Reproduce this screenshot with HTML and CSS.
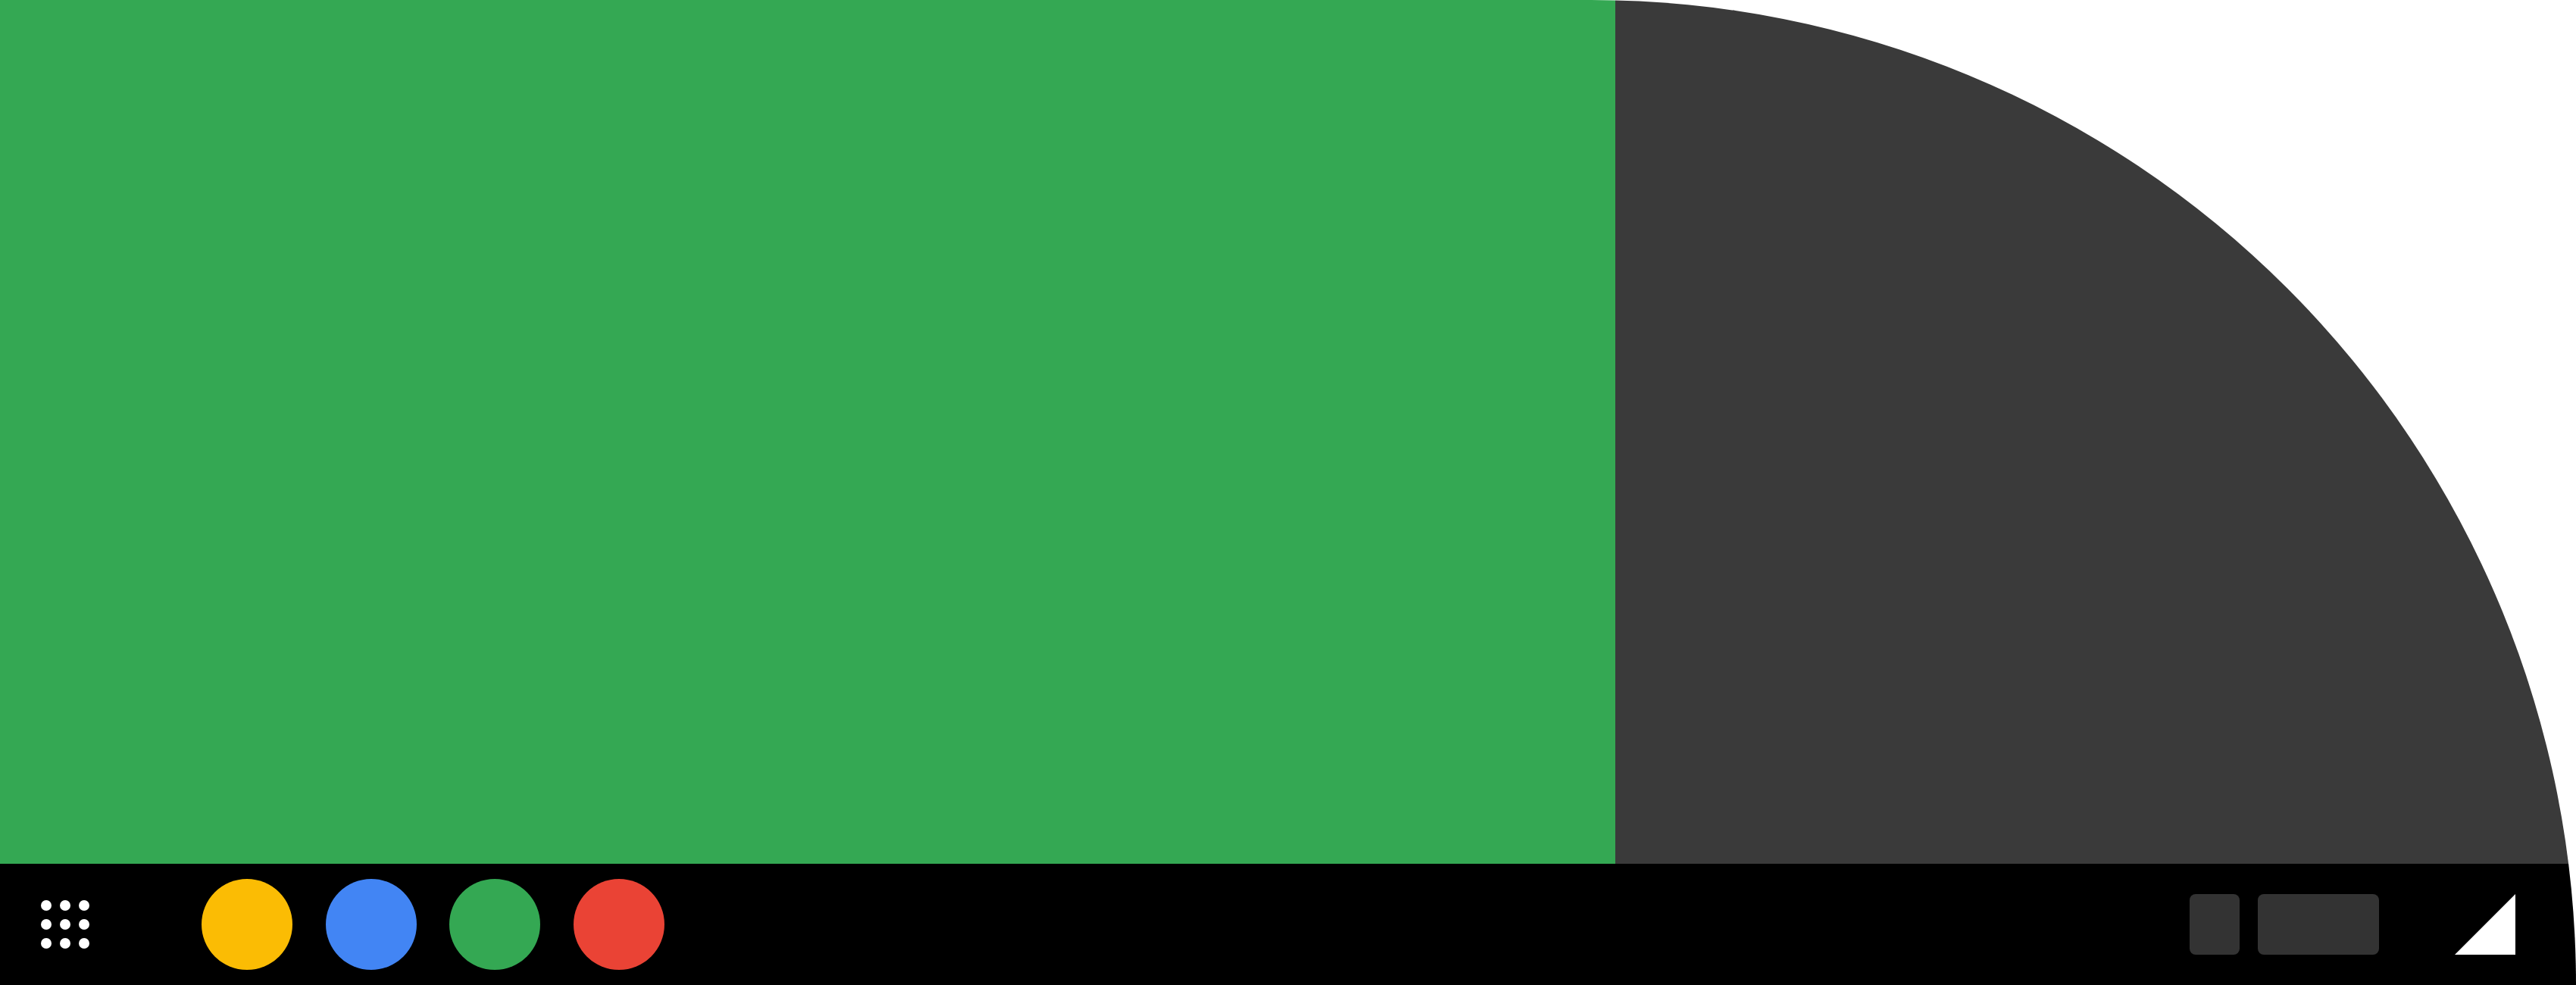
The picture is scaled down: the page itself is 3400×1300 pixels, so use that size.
FILE: index.html
```html
<!DOCTYPE html>
<html lang="en">
<head>
<meta charset="utf-8">
<title>Launcher</title>
<link rel="stylesheet" href="styles.css">
</head>
<body>
<div class="stage">
  <main class="panels">
    <section class="panel-green"></section>
    <section class="panel-dark"></section>
  </main>
  <footer class="shelf">
    <div class="launcher">
      <span class="dot"></span><span class="dot"></span><span class="dot"></span>
      <span class="dot"></span><span class="dot"></span><span class="dot"></span>
      <span class="dot"></span><span class="dot"></span><span class="dot"></span>
    </div>
    <div class="apps">
      <span class="app app-yellow"></span>
      <span class="app app-blue"></span>
      <span class="app app-green"></span>
      <span class="app app-red"></span>
    </div>
    <div class="status">
      <span class="pill pill-small"></span>
      <span class="pill pill-wide"></span>
      <svg class="signal" viewBox="0 0 80 80" aria-hidden="true"><path d="M0 80 80 0V80Z"/></svg>
    </div>
  </footer>
</div>
</body>
</html>
```
FILE: styles.css
```css
html, body {
  margin: 0;
  padding: 0;
  background: #fff;
}

.stage {
  width: 3400px;
  height: 1300px;
  display: flex;
  flex-direction: column;
  overflow: hidden;
  border-top-right-radius: 1300px;
}

.panels {
  height: 1140px;
  display: flex;
}

.panel-green {
  width: 2132px;
  background: #34a853;
}

.panel-dark {
  flex: 1;
  background: #3a3a3a;
}

.shelf {
  height: 160px;
  background: #000;
  display: flex;
  align-items: center;
  padding-left: 54px;
}

.launcher {
  width: 64px;
  display: grid;
  grid-template-columns: repeat(3, 14px);
  gap: 11px;
}

.dot {
  width: 14px;
  height: 14px;
  border-radius: 50%;
  background: #fff;
}

.apps {
  display: flex;
  gap: 43.667px;
  margin-left: 148px;
}

.app {
  width: 120px;
  height: 120px;
  border-radius: 50%;
}

.app-yellow { background: #fbbc04; }
.app-blue { background: #4285f4; }
.app-green { background: #34a853; }
.app-red { background: #ea4335; }

.status {
  display: flex;
  align-items: center;
  margin-left: auto;
  margin-right: 80px;
}

.pill {
  height: 80px;
  background: #333;
  border-radius: 8px;
}

.pill-small { width: 66px; }

.pill-wide {
  width: 160px;
  margin-left: 24px;
}

.signal {
  width: 80px;
  height: 80px;
  margin-left: 100px;
  fill: #fff;
  display: block;
}
```
